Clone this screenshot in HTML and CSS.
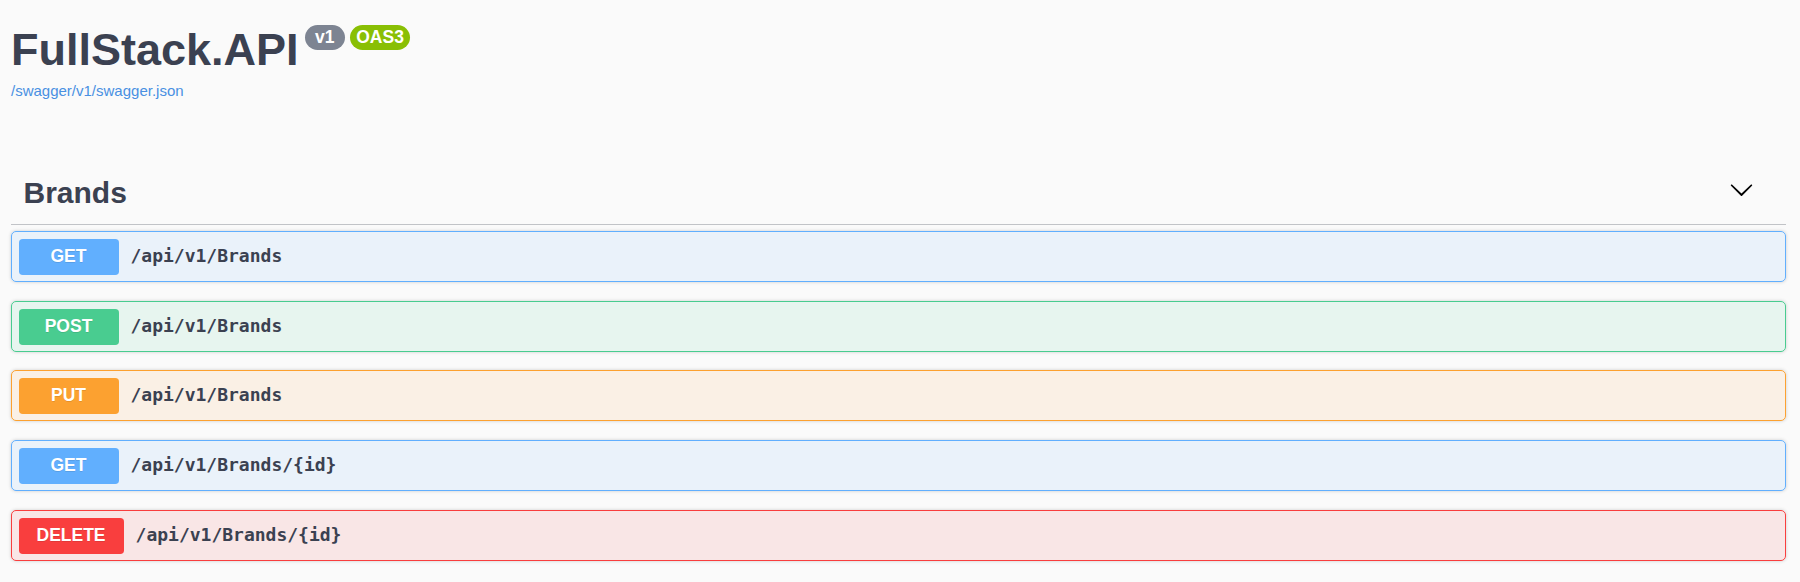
FILE: index.html
```html
<!DOCTYPE html>
<html lang="en">
<head>
<meta charset="utf-8">
<title>FullStack.API</title>
<link rel="stylesheet" href="styles.css">
</head>
<body>
<div class="wrapper">
  <div class="info">
    <div class="title-row">
      <h1 class="title">FullStack.API</h1>
      <span class="badge badge-version">v1</span>
      <span class="badge badge-oas">OAS3</span>
    </div>
    <a class="spec-link" href="#">/swagger/v1/swagger.json</a>
  </div>

  <section class="tag">
    <div class="tag-header">
      <h2 class="tag-name">Brands</h2>
      <svg class="tag-arrow" viewBox="0 0 20 20" aria-hidden="true"><path d="M17.418 6.109c.272-.268.709-.268.979 0s.271.701 0 .969l-7.908 7.830c-.27.268-.707.268-.979 0l-7.908-7.830c-.27-.268-.27-.701 0-.969.271-.268.709-.268.979 0L10 13.25l7.418-7.141z"/></svg>
    </div>
    <div class="ops">
      <div class="op op-get"><span class="method">GET</span><span class="path">/api/v1/Brands</span></div>
      <div class="op op-post"><span class="method">POST</span><span class="path">/api/v1/Brands</span></div>
      <div class="op op-put"><span class="method">PUT</span><span class="path">/api/v1/Brands</span></div>
      <div class="op op-get"><span class="method">GET</span><span class="path">/api/v1/Brands/{id}</span></div>
      <div class="op op-delete"><span class="method">DELETE</span><span class="path">/api/v1/Brands/{id}</span></div>
    </div>
  </section>
</div>
</body>
</html>
```

FILE: styles.css
```css
html, body {
  margin: 0;
  padding: 0;
  background: #fafafa;
}

body {
  font-family: "Liberation Sans", Arial, sans-serif;
  color: #3b4151;
}

.wrapper {
  padding: 0 14px 0 11px;
}

.title-row {
  display: flex;
  align-items: flex-start;
  margin-top: 25px;
}

.title {
  margin: 2px 0 0;
  font-size: 45px;
  line-height: 45px;
  font-weight: 700;
  color: #3b4151;
}

.badge {
  display: inline-block;
  height: 25px;
  line-height: 25px;
  border-radius: 70px;
  color: #fff;
  font-size: 17.5px;
  font-weight: 700;
  box-sizing: border-box;
}

.badge-version {
  margin-left: 6.5px;
  padding: 0 10px;
  background: #7d8492;
}

.badge-oas {
  margin-left: 5.7px;
  padding: 0 6px;
  background: #89bf04;
}

.spec-link {
  display: block;
  margin-top: 10.3px;
  font-size: 15px;
  line-height: 18px;
  color: #4990e2;
  text-decoration: none;
}

.tag {
  margin-top: 61.7px;
}

.tag-header {
  display: flex;
  justify-content: space-between;
  align-items: flex-start;
  border-bottom: 1px solid #c1c3c7;
}

.tag-name {
  margin: 0;
  padding: 12.6px 0 13.4px 12.5px;
  font-size: 30px;
  line-height: 36px;
  font-weight: 700;
  color: #3b4151;
}

.tag-arrow {
  width: 25px;
  height: 25px;
  margin: 15px 32px 0 0;
  fill: #000;
}

.ops {
  padding-top: 6px;
}

.op {
  display: flex;
  align-items: flex-start;
  height: 51px;
  box-sizing: border-box;
  margin-bottom: 18.75px;
  padding: 7px 6.5px 6px;
  border: 1px solid;
  border-radius: 5px;
  box-shadow: 0 0 3.75px rgba(0, 0, 0, 0.19);
}

.method {
  min-width: 100px;
  height: 36px;
  box-sizing: border-box;
  padding: 0 18px 2px;
  line-height: 34px;
  text-align: center;
  border-radius: 3.75px;
  color: #fff;
  font-size: 17.5px;
  font-weight: 700;
  text-shadow: 0 1.25px 0 rgba(0, 0, 0, 0.1);
}

.path {
  padding-left: 12px;
  font-family: "DejaVu Sans Mono", "Liberation Mono", monospace;
  font-size: 18px;
  font-weight: 700;
  line-height: 34px;
  color: #3b4151;
}

.op-get {
  border-color: #61affe;
  background: rgba(97, 175, 254, 0.1);
}
.op-get .method { background: #61affe; }

.op-post {
  border-color: #49cc90;
  background: rgba(73, 204, 144, 0.1);
}
.op-post .method { background: #49cc90; }

.op-put {
  border-color: #fca130;
  background: rgba(252, 161, 48, 0.1);
}
.op-put .method { background: #fca130; }

.op-delete {
  border-color: #f93e3e;
  background: rgba(249, 62, 62, 0.1);
}
.op-delete .method { background: #f93e3e; }
```
